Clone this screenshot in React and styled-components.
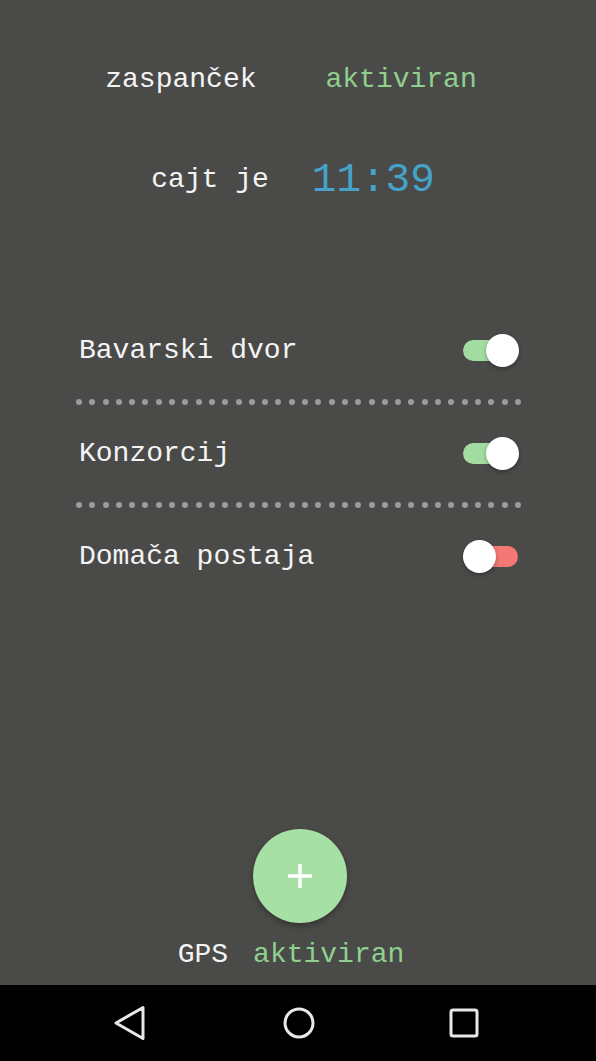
import React from 'react'
import styled, { createGlobalStyle } from 'styled-components'

const GlobalStyle = createGlobalStyle`
    html, body {
        margin: 0;
        padding: 0;
        background: #4a4b48;
    }
    body {
        font-family: "Liberation Mono", "Courier New", monospace;
    }
`

const Screen = styled.div`
    width: 596px;
    height: 1061px;
    display: flex;
    flex-direction: column;
    background: #4a4b48;
    color: #f4f4f4;
    overflow: hidden;
`
const Main = styled.div`
    flex: 1;
    display: flex;
    flex-direction: column;
`
const Line = styled.div`
    display: flex;
    justify-content: center;
    align-items: center;
    gap: ${p => p.gap}px;
    padding-right: ${p => p.pad ?? 14}px;
    margin-top: ${p => p.top}px;
    font-size: 28px;
    line-height: 32px;
`
const Green = styled.span`
    color: #8fd08e;
`
const Clock = styled.span`
    color: #45a2c8;
    font-size: 41px;
    line-height: 48px;
`
const List = styled.div`
    margin: 98px 75px 0 76px;
    display: flex;
    flex-direction: column;
`
const Row = styled.div`
    height: 97px;
    display: flex;
    align-items: center;
    justify-content: space-between;
    padding: 0 3px 0 3px;
    font-size: 28px;
`
const Dots = styled.div`
    height: 6px;
    display: flex;
    justify-content: space-between;
`
const Dot = styled.span`
    width: 6px;
    height: 6px;
    border-radius: 50%;
    background: #9c9c9b;
`
const Track = styled.div`
    position: relative;
    width: 55px;
    height: 21px;
    border-radius: 11px;
    background: ${p => (p.on ? '#a3dca1' : '#f47873')};
`
const Thumb = styled.div`
    position: absolute;
    top: -6px;
    left: ${p => (p.on ? '23px' : '0')};
    width: 33px;
    height: 33px;
    border-radius: 50%;
    background: #ffffff;
    box-shadow: 0 2px 4px rgba(0, 0, 0, 0.3);
`
const Bottom = styled.div`
    margin-top: auto;
    padding-bottom: 14px;
    display: flex;
    flex-direction: column;
    align-items: center;
`
const Fab = styled.div`
    width: 94px;
    height: 94px;
    margin-left: 4px;
    border-radius: 50%;
    background: #a7e0a5;
    box-shadow: 0 3px 6px rgba(0, 0, 0, 0.3);
    display: flex;
    align-items: center;
    justify-content: center;
`
const Gps = styled(Line)`
    align-self: stretch;
    gap: 25px;
    margin-top: 16px;
`
const NavBar = styled.div`
    height: 76px;
    background: #000;
    display: flex;
    align-items: center;
    padding-left: 113px;
`
const NavIcon = styled.svg`
    width: 34px;
    height: 34px;
    margin-left: ${p => p.shift || 0}px;
`

const Switch = ({ on }) => (
    <Track on={on}>
        <Thumb on={on} />
    </Track>
)

const DotLine = () => (
    <Dots>
        {Array.from({ length: 34 }, (_, i) => <Dot key={i} />)}
    </Dots>
)

const stations = [
    { name: 'Bavarski dvor', on: true },
    { name: 'Konzorcij', on: true },
    { name: 'Domača postaja', on: false },
]

const App = () => {
    return (
        <Screen>
            <GlobalStyle />
            <Main>
                <Line top={64} gap={69}>
                    <span>zaspanček</span>
                    <Green>aktiviran</Green>
                </Line>
                <Line top={60} gap={43} pad={10}>
                    <span>cajt je</span>
                    <Clock>11:39</Clock>
                </Line>
                <List>
                    {stations.map((s, i) => (
                        <React.Fragment key={s.name}>
                            {i > 0 && <DotLine />}
                            <Row>
                                <span>{s.name}</span>
                                <Switch on={s.on} />
                            </Row>
                        </React.Fragment>
                    ))}
                </List>
                <Bottom>
                    <Fab>
                        <svg width="26" height="26" viewBox="0 0 26 26">
                            <path d="M13 1v24M1 13h24" stroke="#fff" strokeWidth="3.4" />
                        </svg>
                    </Fab>
                    <Gps>
                        <span>GPS</span>
                        <Green>aktiviran</Green>
                    </Gps>
                </Bottom>
            </Main>
            <NavBar>
                <NavIcon viewBox="0 0 34 34">
                    <path d="M30 1.5 L3 17 L30 32.5 Z" fill="none" stroke="#e8e8e8" strokeWidth="3" strokeLinejoin="round" />
                </NavIcon>
                <NavIcon viewBox="0 0 34 34" shift={135}>
                    <circle cx="17" cy="17" r="14" fill="none" stroke="#e8e8e8" strokeWidth="3" />
                </NavIcon>
                <NavIcon viewBox="0 0 34 34" shift={131}>
                    <rect x="4" y="4" width="26" height="26" rx="2" fill="none" stroke="#e8e8e8" strokeWidth="3" />
                </NavIcon>
            </NavBar>
        </Screen>
    )
}

export default App
